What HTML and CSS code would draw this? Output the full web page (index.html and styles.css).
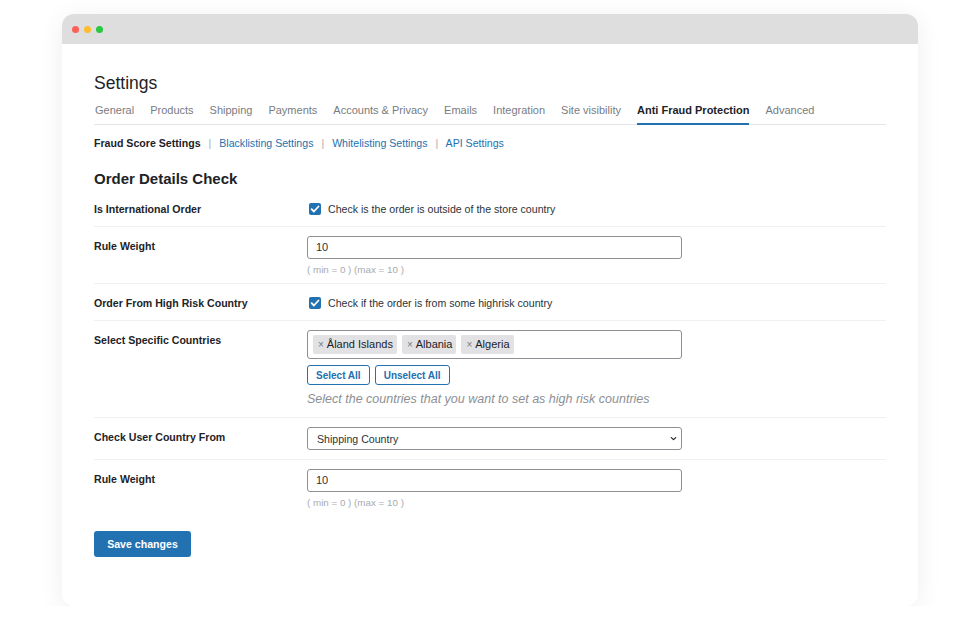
FILE: index.html
```html
<!DOCTYPE html>
<html lang="en">
<head>
    <meta charset="UTF-8">
    <title>Settings - Anti Fraud Protection</title>
    <link rel="stylesheet" href="styles.css">
</head>
<body>

    <div class="window">
        <div class="titlebar">
            <span class="dot red"></span>
            <span class="dot yellow"></span>
            <span class="dot green"></span>
        </div>

        <div class="content">
            <h1>Settings</h1>

            <!-- Main tabs -->
            <nav class="tabs">
                <a>General</a>
                <a>Products</a>
                <a>Shipping</a>
                <a>Payments</a>
                <a>Accounts &amp; Privacy</a>
                <a>Emails</a>
                <a>Integration</a>
                <a>Site visibility</a>
                <a class="active">Anti Fraud Protection</a>
                <a>Advanced</a>
            </nav>

            <!-- Sub sections -->
            <div class="subnav">
                <strong>Fraud Score Settings</strong>
                <span class="sep">|</span>
                <a>Blacklisting Settings</a>
                <span class="sep">|</span>
                <a>Whitelisting Settings</a>
                <span class="sep">|</span>
                <a>API Settings</a>
            </div>

            <h2>Order Details Check</h2>

            <div class="form-table">
                <div class="row">
                    <div class="label">Is International Order</div>
                    <div class="field">
                        <label class="check"><span class="box"><svg viewBox="0 0 12 12" width="12" height="12"><path d="M2.6 6.2l2.3 2.3 4.6-5" fill="none" stroke="#fff" stroke-width="1.8" stroke-linecap="round" stroke-linejoin="round"/></svg></span>Check is the order is outside of the store country</label>
                    </div>
                </div>

                <div class="row">
                    <div class="label">Rule Weight</div>
                    <div class="field">
                        <div class="input">10</div>
                        <div class="hint">( min = 0 ) (max = 10 )</div>
                    </div>
                </div>

                <div class="row">
                    <div class="label">Order From High Risk Country</div>
                    <div class="field">
                        <label class="check"><span class="box"><svg viewBox="0 0 12 12" width="12" height="12"><path d="M2.6 6.2l2.3 2.3 4.6-5" fill="none" stroke="#fff" stroke-width="1.8" stroke-linecap="round" stroke-linejoin="round"/></svg></span>Check if the order is from some highrisk country</label>
                    </div>
                </div>

                <div class="row tall">
                    <div class="label">Select Specific Countries</div>
                    <div class="field">
                        <div class="multi">
                            <span class="tag"><span class="x">×</span>Åland Islands</span>
                            <span class="tag"><span class="x">×</span>Albania</span>
                            <span class="tag"><span class="x">×</span>Algeria</span>
                        </div>
                        <div class="btn-row">
                            <button class="btn-outline">Select All</button>
                            <button class="btn-outline">Unselect All</button>
                        </div>
                        <p class="description">Select the countries that you want to set as high risk countries</p>
                    </div>
                </div>

                <div class="row">
                    <div class="label">Check User Country From</div>
                    <div class="field">
                        <div class="select">
                            <span>Shipping Country</span>
                            <svg viewBox="0 0 8 8" width="7" height="7"><path d="M1.5 3l2.5 2.3L6.5 3" fill="none" stroke="#1d2327" stroke-width="1.4" stroke-linecap="round" stroke-linejoin="round"/></svg>
                        </div>
                    </div>
                </div>

                <div class="row last">
                    <div class="label">Rule Weight</div>
                    <div class="field">
                        <div class="input">10</div>
                        <div class="hint">( min = 0 ) (max = 10 )</div>
                    </div>
                </div>
            </div>

            <button class="btn-primary">Save changes</button>
        </div>
    </div>

</body>
</html>
```

FILE: styles.css
```css
* {
    box-sizing: border-box;
}

body {
    margin: 0;
    background: #fff;
    font-family: "Liberation Sans", Arial, sans-serif;
    color: #1d2327;
}

.window {
    width: 856px;
    margin: 14px 0 0 62px;
    background: #fff;
    border-radius: 12px;
    overflow: hidden;
    box-shadow: 0 4px 26px rgba(0, 0, 0, 0.07);
}

.titlebar {
    height: 30px;
    background: #dedede;
    display: flex;
    align-items: center;
    gap: 5px;
    padding-left: 10px;
}

.dot {
    width: 7px;
    height: 7px;
    border-radius: 50%;
}

.dot.red { background: #fe5f57; }
.dot.yellow { background: #febc2e; }
.dot.green { background: #28c840; }

.content {
    padding: 28px 32px 49px;
}

h1 {
    margin: 0;
    font-size: 17.5px;
    font-weight: 400;
    line-height: 22px;
    color: #1d2327;
}

.tabs {
    display: flex;
    gap: 16px;
    margin-top: 8px;
    border-bottom: 1px solid #e4e4e6;
    padding-left: 1px;
}

.tabs a {
    font-size: 11px;
    line-height: 16px;
    color: #787c82;
    padding-bottom: 5px;
    border-bottom: 2px solid transparent;
    margin-bottom: -1px;
}

.tabs a.active {
    color: #1d2327;
    font-weight: bold;
    border-bottom-color: #2271b1;
}

.subnav {
    margin-top: 10px;
    font-size: 10.6px;
    line-height: 16px;
}

.subnav a {
    color: #2271b1;
}

.subnav .sep {
    color: #a7aaad;
    margin: 0 5px;
}

h2 {
    margin: 18px 0 1px;
    font-size: 15px;
    line-height: 20px;
    font-weight: bold;
}

.row {
    display: grid;
    grid-template-columns: 213px 375px;
    padding: 9px 0 7px;
    border-bottom: 1px solid #f0f0f1;
}

.row.tall {
    padding-bottom: 9px;
}

.row.last {
    border-bottom: none;
}

.label {
    font-size: 10.6px;
    font-weight: bold;
    line-height: 20px;
}

.check {
    display: flex;
    align-items: center;
    gap: 7px;
    height: 20px;
    font-size: 10.6px;
    color: #2c3338;
    padding-left: 2px;
}

.box {
    width: 12px;
    height: 12px;
    border-radius: 2px;
    background: #2271b1;
    display: flex;
}

.input {
    height: 23px;
    border: 1px solid #8c8f94;
    border-radius: 3px;
    padding: 0 8px;
    font-size: 11px;
    line-height: 21px;
    color: #2c3338;
}

.hint {
    margin-top: 4px;
    font-size: 9.8px;
    line-height: 13px;
    color: #a7aaad;
}

.multi {
    height: 29px;
    border: 1px solid #8c8f94;
    border-radius: 3px;
    padding: 0 5px;
    display: flex;
    align-items: center;
    gap: 5px;
}

.tag {
    background: #e2e2e4;
    border-radius: 2px;
    height: 19px;
    padding: 0 4px 0 5px;
    font-size: 11px;
    line-height: 19px;
    color: #1d2327;
}

.tag .x {
    color: #787c82;
    font-size: 10px;
    margin-right: 3px;
}

.btn-row {
    display: flex;
    gap: 5px;
    margin-top: 6px;
}

.btn-outline {
    height: 20px;
    padding: 0 8px;
    background: #fff;
    border: 1px solid #2271b1;
    border-radius: 3px;
    color: #2271b1;
    font-family: inherit;
    font-size: 10px;
    font-weight: bold;
}

.description {
    margin: 5px 0 0;
    font-size: 12.5px;
    line-height: 18px;
    font-style: italic;
    color: #8c8f94;
}

.select {
    height: 23px;
    margin-bottom: 2px;
    border: 1px solid #8c8f94;
    border-radius: 3px;
    padding: 0 4px 0 9px;
    display: flex;
    align-items: center;
    justify-content: space-between;
    font-size: 10.6px;
    color: #2c3338;
}

.btn-primary {
    margin-top: 15px;
    width: 97px;
    height: 26px;
    background: #2271b1;
    border: none;
    border-radius: 3px;
    color: #fff;
    font-family: inherit;
    font-size: 10.6px;
    font-weight: bold;
}
```
